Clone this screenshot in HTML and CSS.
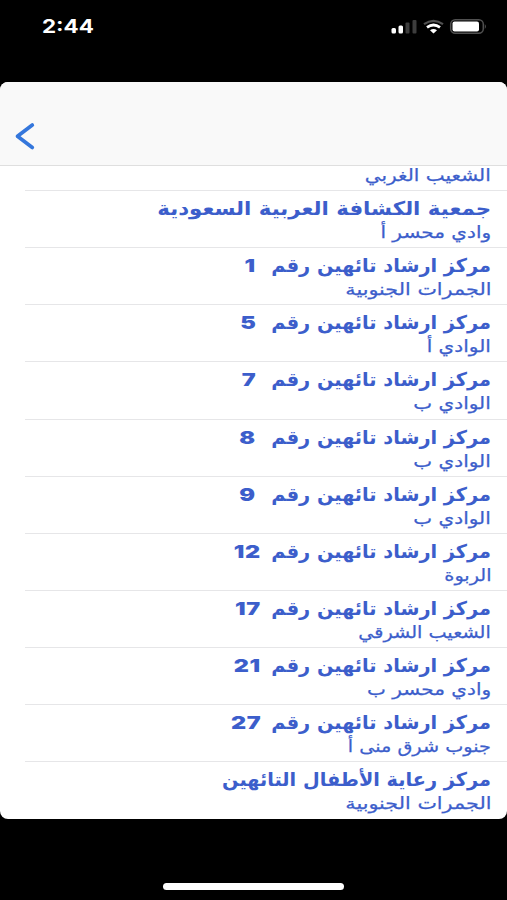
FILE: index.html
```html
<!DOCTYPE html>
<html lang="ar">
  <head>
    <title>مراكز ارشاد التائهين</title>
    <meta charset="utf-8" />
    <meta name="viewport" content="width=device-width" />
    <link rel="stylesheet" href="styles.css">
  </head>
  <body>
    <div class="status">
      <span class="time">2:44</span>
      <svg class="icons" width="100" height="20" viewBox="0 0 100 20">
        <g fill="#fff">
          <rect x="1.5" y="10" width="4.5" height="5.5" rx="1.5" />
          <rect x="8.5" y="7.5" width="4.5" height="8" rx="1.5" />
        </g>
        <g fill="#3d3d3d">
          <rect x="15.5" y="4.5" width="4" height="11" rx="1" />
          <rect x="22.5" y="2" width="4" height="13.5" rx="1" />
        </g>
        <path d="M34 6.2Q43.5 -0.6 53 6.2" fill="none" stroke="#505050" stroke-width="2.2" />
        <path d="M37 9.4Q43.5 4.6 50 9.4" fill="none" stroke="#fff" stroke-width="2.7" />
        <path d="M40 12.3Q43.5 9.5 47 12.3L43.5 15.5Z" fill="#fff" />
        <rect x="60.7" y="1.7" width="32.6" height="13.6" rx="4.5" fill="none" stroke="#505050" stroke-width="1.5" />
        <rect x="62.5" y="3.5" width="26.5" height="10" rx="2" fill="#fff" />
        <path d="M94.8 6Q97 8.5 94.8 11Z" fill="#505050" />
      </svg>
    </div>
    <div class="screen">
      <div class="navbar">
        <svg class="back" width="22" height="30" viewBox="0 0 22 30">
          <path d="M18.3 4L3.5 15.3L18.3 26.5" fill="none" stroke="#3577dc" stroke-width="3.7" stroke-linecap="round" stroke-linejoin="round" />
        </svg>
      </div>
      <div class="list" dir="rtl">
        <div class="row first">
          <div class="place wide"><span>الشعيب الغربي</span></div>
        </div>
        <div class="row">
          <div class="title long"><span>جمعية الكشافة العربية السعودية</span></div>
          <div class="place wide"><span>وادي محسر أ</span></div>
        </div>
        <div class="row">
          <div class="title"><span class="center">مركز ارشاد تائهين رقم</span><b class="num">1</b></div>
          <div class="place extra"><span>الجمرات الجنوبية</span></div>
        </div>
        <div class="row">
          <div class="title"><span class="center">مركز ارشاد تائهين رقم</span><b class="num">5</b></div>
          <div class="place wide"><span>الوادي أ</span></div>
        </div>
        <div class="row">
          <div class="title"><span class="center">مركز ارشاد تائهين رقم</span><b class="num">7</b></div>
          <div class="place wide"><span>الوادي ب</span></div>
        </div>
        <div class="row">
          <div class="title"><span class="center">مركز ارشاد تائهين رقم</span><b class="num">8</b></div>
          <div class="place wide"><span>الوادي ب</span></div>
        </div>
        <div class="row">
          <div class="title"><span class="center">مركز ارشاد تائهين رقم</span><b class="num">9</b></div>
          <div class="place wide"><span>الوادي ب</span></div>
        </div>
        <div class="row">
          <div class="title"><span class="center">مركز ارشاد تائهين رقم</span><b class="num two">12</b></div>
          <div class="place"><span>الربوة</span></div>
        </div>
        <div class="row">
          <div class="title"><span class="center">مركز ارشاد تائهين رقم</span><b class="num two">17</b></div>
          <div class="place"><span>الشعيب الشرقي</span></div>
        </div>
        <div class="row">
          <div class="title"><span class="center">مركز ارشاد تائهين رقم</span><b class="num two">21</b></div>
          <div class="place wide"><span>وادي محسر ب</span></div>
        </div>
        <div class="row">
          <div class="title"><span class="center">مركز ارشاد تائهين رقم</span><b class="num two">27</b></div>
          <div class="place"><span>جنوب شرق منى أ</span></div>
        </div>
        <div class="row">
          <div class="title"><span>مركز رعاية الأطفال التائهين</span></div>
          <div class="place extra"><span>الجمرات الجنوبية</span></div>
        </div>
      </div>
    </div>
    <div class="home"></div>
  </body>
</html>
```
FILE: styles.css
```css
* {
  box-sizing: border-box;
}
body {
  margin: 0;
  height: 900px;
  overflow: hidden;
  background: #000;
  font-family: "DejaVu Sans", sans-serif;
}
.status {
  display: flex;
  justify-content: space-between;
  height: 82px;
  padding: 15px 17px 0 42px;
  color: #fff;
}
.time {
  font: bold 19px/24px Inter, sans-serif;
  transform: scaleX(1.18);
  transform-origin: left;
}
.icons {
  margin-top: 3px;
}
.screen {
  height: 737px;
  border-radius: 8px;
  background: #fff;
  overflow: hidden;
}
.navbar {
  height: 84px;
  padding: 39px 0 0 14px;
  background: #f9f9f9;
  border-bottom: 1px solid #dfdfdf;
}
.back {
  display: block;
}
.row {
  height: 57.15px;
  margin-left: 25px;
  padding: 3px 16px 0 0;
  border-bottom: 1px solid #e6e6e8;
  color: #3c5ecb;
  white-space: nowrap;
}
.row.first {
  height: 25px;
  padding-top: 0;
}
.row:last-child {
  border-bottom: none;
}
.title {
  display: flex;
  height: 29px;
  line-height: 28px;
  font-size: 19px;
  font-weight: bold;
}
.title span,
.place span {
  display: inline-block;
  transform: scaleX(1.015);
  transform-origin: right;
}
.title.long span {
  transform: scaleX(1.12);
}
.center {
  width: 216px;
}
.num {
  margin-right: 19px;
  font-family: Inter, sans-serif;
  font-size: 18px;
  line-height: 29px;
  letter-spacing: 0.4px;
  transform: scaleX(1.3);
  transform-origin: right;
}
.num.two {
  margin-right: 14px;
}
.place {
  height: 20px;
  line-height: 20px;
  font-size: 16.5px;
  -webkit-text-stroke: 0.25px #3c5ecb;
}
.place span {
  transform: scaleX(1.165);
}
.place.wide span {
  transform: scaleX(1.215);
}
.place.extra span {
  transform: scaleX(1.255);
}
.home {
  width: 181px;
  height: 7px;
  margin: 64px auto 0;
  border-radius: 4px;
  background: #fff;
}
```
